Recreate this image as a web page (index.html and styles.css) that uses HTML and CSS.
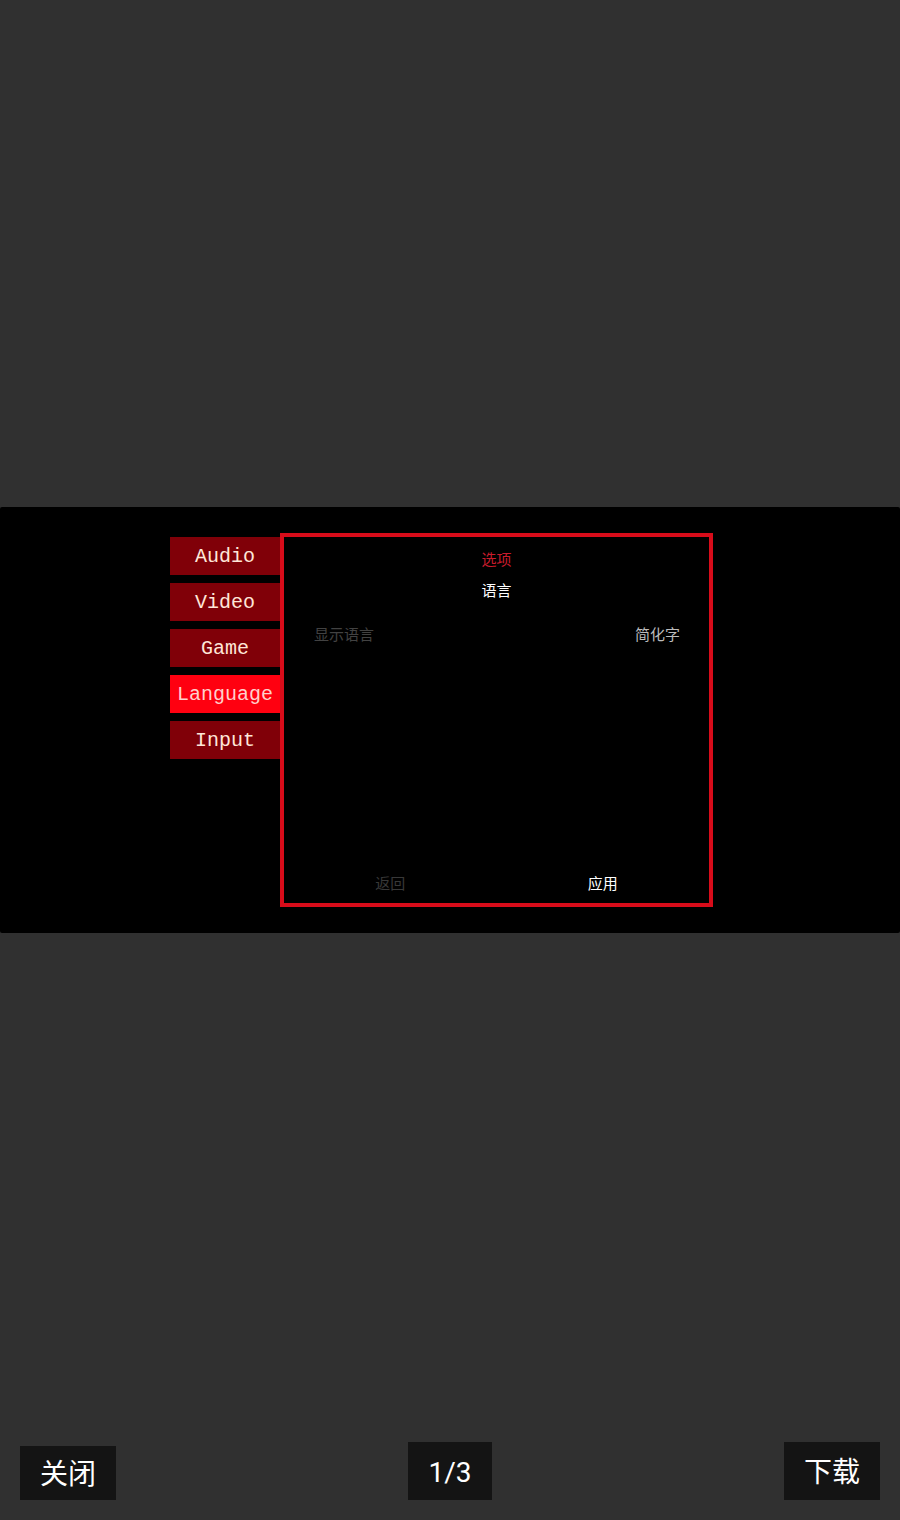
FILE: index.html
```
<!DOCTYPE html>
<html lang="zh-CN">
<head>
  <meta charset="UTF-8" />
  <meta name="viewport" content="width=device-width, initial-scale=1" />
  <title>选项</title>
  <link rel="stylesheet" href="styles.css">
</head>
<body>

  <main class="stage">
    <div class="game">
      <nav class="tabs" lang="en">
        <button class="tab" type="button">Audio</button>
        <button class="tab" type="button">Video</button>
        <button class="tab" type="button">Game</button>
        <button class="tab active" type="button">Language</button>
        <button class="tab" type="button">Input</button>
      </nav>

      <form class="panel">
        <h1>选项</h1>
        <h2>语言</h2>
        <div class="row">
          <label for="language">显示语言</label>
          <select id="language">
            <option>简化字</option>
          </select>
        </div>
        <div class="actions">
          <button class="back" type="button">返回</button>
          <button class="apply" type="button">应用</button>
        </div>
      </form>
    </div>
  </main>

  <footer class="controls">
    <button class="close" type="button">关闭</button>
    <span class="counter">1/3</span>
    <button class="download" type="button">下载</button>
  </footer>

</body>
</html>
```
FILE: styles.css
```
* {
  box-sizing: border-box;
}
body {
  display: flex;
  flex-direction: column;
  min-height: 100vh;
  margin: 0;
  background: #303030;
  color: #fff;
  font-family: Roboto, "Noto Sans CJK SC", sans-serif;
}
button,
select {
  margin: 0;
  padding: 0;
  border: 0;
  background: none;
  color: inherit;
  font: inherit;
}
button {
  cursor: pointer;
}

/* game screen */
.stage {
  flex: 1;
  display: flex;
  align-items: center;
}
.game {
  display: flex;
  align-items: stretch;
  width: 100%;
  aspect-ratio: 900 / 426;
  padding: 26px 0 26px 170px;
  background: #000;
  border-radius: 2px;
}
.tabs {
  display: flex;
  flex-direction: column;
  gap: 8px;
  width: 110px;
  padding-top: 4px;
}
.tab {
  height: 38px;
  padding-top: 2px;
  background: #800008;
  color: #ffe6d8;
  font-family: "Liberation Mono", monospace;
  font-size: 20px;
  line-height: 36px;
}
.tab.active {
  background: #ff0010;
  color: #ffd0cc;
}
.panel {
  display: flex;
  flex-direction: column;
  flex: 0 1 433px;
  padding: 11px 0 9px;
  border: 4px solid #d80c1a;
  font-family: "Noto Sans CJK SC", sans-serif;
  font-size: 15px;
  line-height: 22px;
}
h1,
h2 {
  margin: 0;
  font-size: 15px;
  font-weight: normal;
  line-height: 22px;
  text-align: center;
}
h1 {
  margin-bottom: 9px;
  color: #c81c2c;
}
.row {
  display: flex;
  justify-content: space-between;
  margin-top: 22px;
  padding: 0 28px 0 30px;
}
.row label {
  color: #424242;
}
.row select {
  appearance: none;
  color: #bcbcbc;
}
.actions {
  display: grid;
  grid-template-columns: 1fr 1fr;
  justify-items: center;
  margin-top: auto;
}
.back {
  color: #383838;
}

/* viewer controls */
.controls {
  display: flex;
  justify-content: space-between;
  align-items: flex-end;
  height: 80px;
  padding: 0 20px 20px;
}
.controls button,
.counter {
  height: 58px;
  padding: 4px 20px 0;
  background: #141414;
  font-size: 28px;
  line-height: 54px;
}
.controls .close {
  height: 54px;
  line-height: 50px;
}
```
